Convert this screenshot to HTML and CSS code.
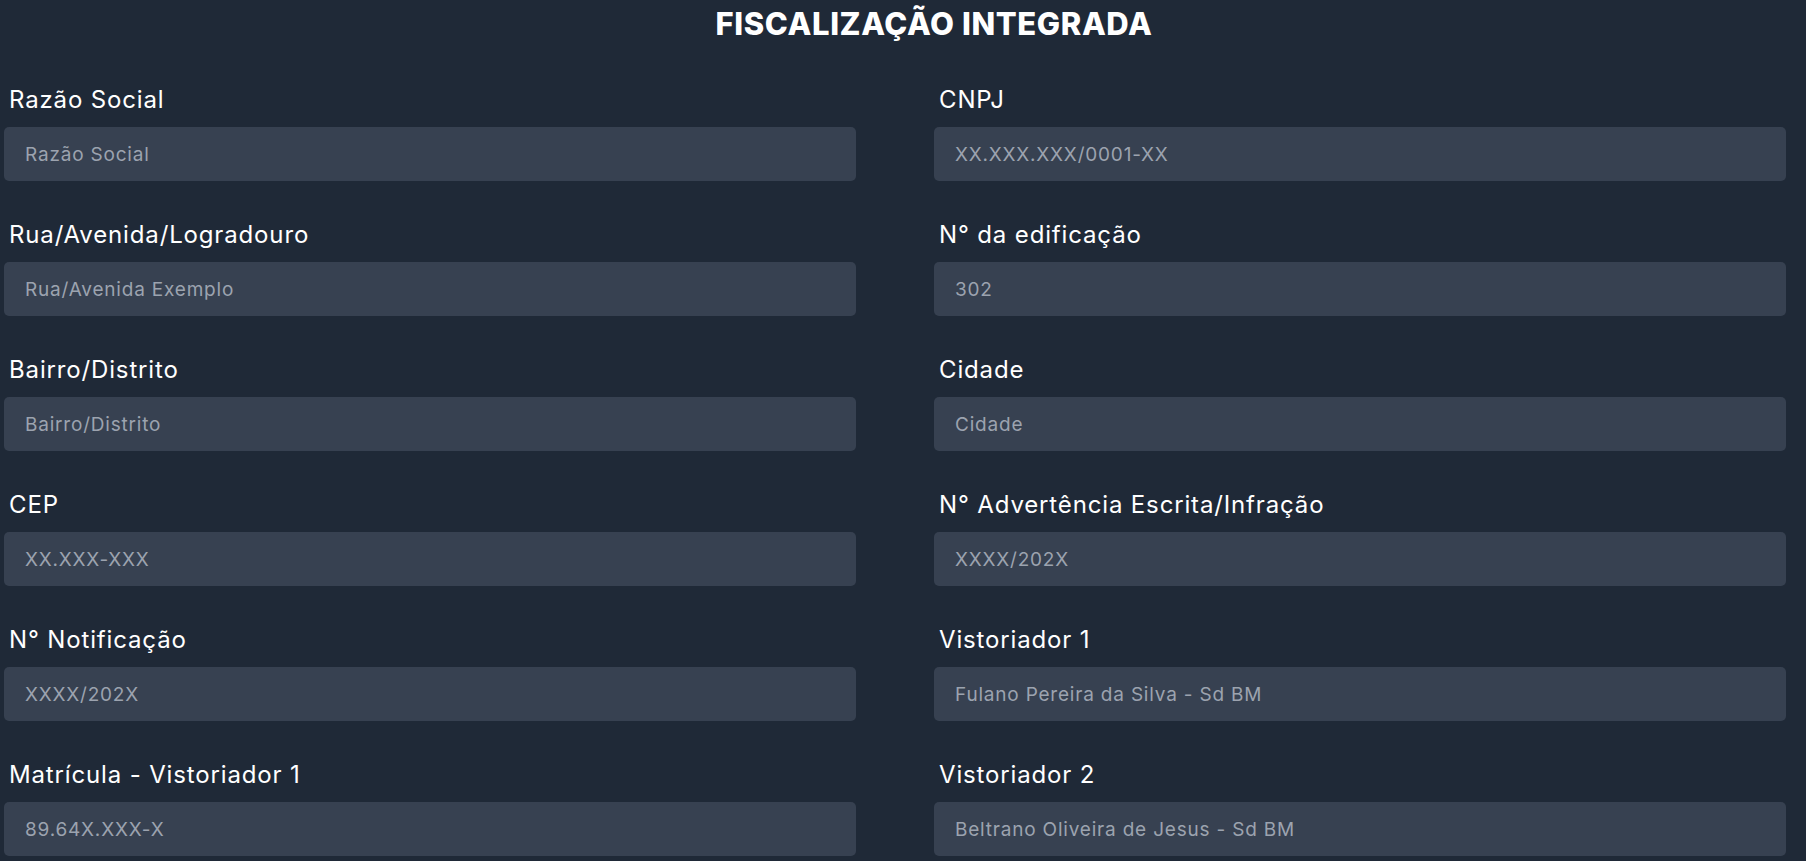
FILE: index.html
```html
<!DOCTYPE html>
<html lang="pt-BR">
<head>
<meta charset="utf-8">
<title>Fiscalização Integrada</title>
<link rel="stylesheet" href="styles.css">
</head>
<body>
<main class="page">
  <h1 class="title">FISCALIZAÇÃO INTEGRADA</h1>
  <form class="form-grid">
    <div class="field"><label class="label">Razão Social</label><input class="input" type="text" placeholder="Razão Social"></div>
    <div class="field"><label class="label">CNPJ</label><input class="input" type="text" placeholder="XX.XXX.XXX/0001-XX"></div>
    <div class="field"><label class="label">Rua/Avenida/Logradouro</label><input class="input" type="text" placeholder="Rua/Avenida Exemplo"></div>
    <div class="field"><label class="label">N° da edificação</label><input class="input" type="text" placeholder="302"></div>
    <div class="field"><label class="label">Bairro/Distrito</label><input class="input" type="text" placeholder="Bairro/Distrito"></div>
    <div class="field"><label class="label">Cidade</label><input class="input" type="text" placeholder="Cidade"></div>
    <div class="field"><label class="label">CEP</label><input class="input" type="text" placeholder="XX.XXX-XXX"></div>
    <div class="field"><label class="label">N° Advertência Escrita/Infração</label><input class="input" type="text" placeholder="XXXX/202X"></div>
    <div class="field"><label class="label">N° Notificação</label><input class="input" type="text" placeholder="XXXX/202X"></div>
    <div class="field"><label class="label">Vistoriador 1</label><input class="input" type="text" placeholder="Fulano Pereira da Silva - Sd BM"></div>
    <div class="field"><label class="label">Matrícula - Vistoriador 1</label><input class="input" type="text" placeholder="89.64X.XXX-X"></div>
    <div class="field"><label class="label">Vistoriador 2</label><input class="input" type="text" placeholder="Beltrano Oliveira de Jesus - Sd BM"></div>
  </form>
</main>
</body>
</html>
```

FILE: styles.css
```css
html, body {
  margin: 0;
  padding: 0;
  background: #1f2937;
  height: 100%;
  overflow: hidden;
}

body {
  font-family: Inter, "Noto Sans", sans-serif;
  color: #ffffff;
}

.page {
  padding: 0 20px 0 4px;
}

.title {
  margin: 0;
  padding: 2px 0 0 78px;
  font-size: 31px;
  line-height: 44px;
  font-weight: 800;
  letter-spacing: 0.6px;
  text-align: center;
  color: #ffffff;
}

.form-grid {
  display: grid;
  grid-template-columns: 1fr 1fr;
  column-gap: 78px;
  row-gap: 39px;
  padding-top: 39px;
}

.field {
  display: flex;
  flex-direction: column;
}

.label {
  font-size: 24px;
  line-height: 30px;
  font-weight: 400;
  letter-spacing: 0.85px;
  padding-left: 5px;
  margin-bottom: 12px;
  color: #ffffff;
}

.input {
  height: 54px;
  box-sizing: border-box;
  border: none;
  border-radius: 5px;
  background: #374151;
  padding: 0 21px;
  font-family: Inter, "Noto Sans", sans-serif;
  font-size: 19px;
  letter-spacing: 0.8px;
  color: #e5e7eb;
  outline: none;
}

.input::placeholder {
  color: #9ca3af;
  opacity: 1;
}
```
